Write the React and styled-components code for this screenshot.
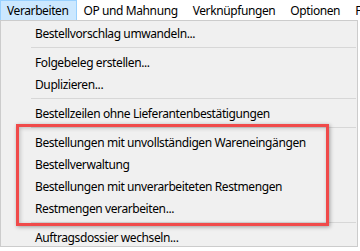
import React from "react";
import styled, { createGlobalStyle } from "styled-components";

const GlobalStyle = createGlobalStyle`
  html, body {
    margin: 0;
    padding: 0;
    background: #ffffff;
  }
  body {
    font-family: "Segoe UI", "Noto Sans", "Open Sans", sans-serif;
    font-size: 12px;
    letter-spacing: -0.4px;
    color: #000000;
  }
`;

const Screen = styled.div`
  position: relative;
  width: 360px;
  height: 251px;
  overflow: hidden;
  background: #ffffff;
`;

const MenuBar = styled.div`
  display: flex;
  height: 20px;
  align-items: stretch;
  white-space: nowrap;
`;

const MenuTitle = styled.div`
  display: flex;
  align-items: center;
  padding: 0 7px 1px 6px;
  border: 1px solid ${(p) => (p.$open ? "#99d1ff" : "transparent")};
  border-bottom: none;
  background: ${(p) => (p.$open ? "#cce8ff" : "transparent")};
`;

const Dropdown = styled.div`
  width: 358px;
  height: 227px;
  box-sizing: border-box;
  border: 1px solid #cccccc;
  background: #f0f0f0;
  padding-top: 1px;
`;

const Item = styled.div`
  height: 22px;
  display: flex;
  align-items: center;
  padding-left: 34px;
  white-space: nowrap;
`;

const Separator = styled.div`
  height: 7px;
  display: flex;
  align-items: center;
  margin: 0 1px 0 30px;

  &::after {
    content: "";
    flex: 1;
    height: 1px;
    background: #d7d7d7;
  }
`;

const Highlight = styled.div`
  position: absolute;
  left: 16px;
  top: 124px;
  width: 313px;
  height: 102px;
  box-sizing: border-box;
  border: 3px solid #f04a4a;
  box-shadow: 1px 1px 4px rgba(0, 0, 0, 0.35),
    inset 1px 1px 4px rgba(0, 0, 0, 0.22);
  pointer-events: none;
`;

const menus = ["Verarbeiten", "OP und Mahnung", "Verknüpfungen", "Optionen", "Fenster"];

const entries = [
  "Bestellvorschlag umwandeln...",
  "-",
  "Folgebeleg erstellen...",
  "Duplizieren...",
  "-",
  "Bestellzeilen ohne Lieferantenbestätigungen",
  "-",
  "Bestellungen mit unvollständigen Wareneingängen",
  "Bestellverwaltung",
  "Bestellungen mit unverarbeiteten Restmengen",
  "Restmengen verarbeiten...",
  "-",
  "Auftragsdossier wechseln...",
];

function App() {
  return (
    <Screen>
      <GlobalStyle />
      <MenuBar>
        {menus.map((m, i) => (
          <MenuTitle key={m} $open={i === 0}>
            {m}
          </MenuTitle>
        ))}
      </MenuBar>
      <Dropdown>
        {entries.map((e, i) =>
          e === "-" ? <Separator key={i} /> : <Item key={i}>{e}</Item>
        )}
      </Dropdown>
      <Highlight />
    </Screen>
  );
}

export default App;
